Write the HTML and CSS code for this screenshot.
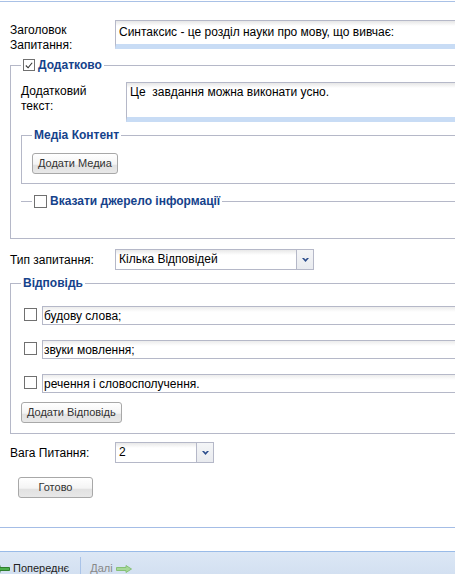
FILE: index.html
```html
<!DOCTYPE html>
<html lang="uk">
<head>
<meta charset="utf-8">
<title>Запитання</title>
<link rel="stylesheet" href="styles.css">
</head>
<body>
<div class="topline"></div>
<div class="form">
  <div class="row row-title">
    <div class="label label-title">Заголовок<br>Запитання:</div>
    <div class="field area area-title">Синтаксис - це розділ науки про мову, що вивчає:</div>
  </div>

  <fieldset class="fs fs-extra">
    <legend><span class="cb cb-legend"><svg width="11" height="11" viewBox="0 0 11 11"><path d="M2 5.5 L4.5 8 L9 2.5" fill="none" stroke="#333" stroke-width="1.2"/></svg></span><span>Додатково</span></legend>
    <div class="row row-extra">
      <div class="label label-extra">Додатковий<br>текст:</div>
      <div class="field area area-extra">Це&nbsp; завдання можна виконати усно.</div>
    </div>
    <fieldset class="fs fs-media">
      <legend>Медіа Контент</legend>
      <button class="btn">Додати Медиа</button>
    </fieldset>
    <fieldset class="fs fs-collapsed">
      <legend><span class="cb cb-src"></span><span>Вказати джерело інформації</span></legend>
    </fieldset>
  </fieldset>

  <div class="row row-select row-type">
    <div class="label">Тип запитання:</div>
    <div class="select select-type">
      <span class="select-text">Кілька Відповідей</span>
      <span class="trigger"><svg width="7" height="4" viewBox="0 0 7 4"><polygon points="0,0 2,0 3.5,1.6 5,0 7,0 3.5,4" fill="#2b4c8b"/></svg></span>
    </div>
  </div>

  <fieldset class="fs fs-answers">
    <legend>Відповідь</legend>
    <div class="ans"><span class="cb cb-ans"></span><div class="field line">будову слова;</div></div>
    <div class="ans"><span class="cb cb-ans"></span><div class="field line">звуки мовлення;</div></div>
    <div class="ans"><span class="cb cb-ans"></span><div class="field line">речення і словосполучення.</div></div>
    <button class="btn btn-add">Додати Відповідь</button>
  </fieldset>

  <div class="row row-select row-weight">
    <div class="label">Вага Питання:</div>
    <div class="select select-weight">
      <span class="select-text">2</span>
      <span class="trigger"><svg width="7" height="4" viewBox="0 0 7 4"><polygon points="0,0 2,0 3.5,1.6 5,0 7,0 3.5,4" fill="#2b4c8b"/></svg></span>
    </div>
  </div>

  <button class="btn btn-done">Готово</button>
</div>

<div class="bottomline"></div>

<div class="footer">
  <svg class="arrow-prev" width="16" height="8" viewBox="0 0 16 8"><polygon points="0.5,4 6,0.5 6,2.5 15.5,2.5 15.5,5.5 6,5.5 6,7.5" fill="#4cae4c" stroke="#2f7f2f" stroke-width="1"/></svg>
  <span class="nav nav-prev">Попереднє</span>
  <span class="sep"></span>
  <span class="nav nav-next">Далі</span>
  <svg class="arrow-next" width="16" height="8" viewBox="0 0 16 8"><polygon points="0.5,2.5 10,2.5 10,0.5 15.5,4 10,7.5 10,5.5 0.5,5.5" fill="#a6d897" stroke="#86c077" stroke-width="1"/></svg>
</div>
</body>
</html>
```

FILE: styles.css
```css
* { box-sizing: border-box; }
html, body { margin: 0; padding: 0; }
body {
  width: 455px;
  height: 574px;
  overflow: hidden;
  background: #fff;
  font-family: "Liberation Sans", Arial, sans-serif;
  font-size: 12px;
  color: #000;
}

.topline { margin-top: 1px; border-top: 1px solid #a9c1e6; }

.form { padding-left: 10px; }

.row { display: flex; align-items: flex-start; }
.row-title { margin-top: 18px; height: 29px; }

.label { line-height: 15px; flex: none; }
.label-title { width: 105px; padding-top: 3px; }
.label-extra { width: 105px; padding-top: 2px; }

.field {
  flex: 1;
  min-width: 0;
  border: 1px solid #b5b8c8;
  border-right: 0;
  background: linear-gradient(#e6e6e6, #fff 5px);
  white-space: nowrap;
  overflow: hidden;
}
.area { border-bottom: 5px solid #c8dcf5; line-height: 14px; padding: 4px 3px 0; }
.area-title { height: 29px; }
.area-extra { height: 40px; padding-top: 2px; }

fieldset {
  margin: 0;
  min-width: 0;
  border: 1px solid #b5b8c8;
  border-right: 0;
}
legend {
  padding: 0 2px;
  height: 14px;
  line-height: 14px;
  font-weight: bold;
  color: #15428b;
  display: flex;
  align-items: center;
  gap: 3px;
}

.cb {
  display: inline-flex;
  align-items: center;
  justify-content: center;
  width: 13px;
  height: 13px;
  border: 1px solid #707070;
  background: #fff;
  flex: none;
}
.cb-legend { width: 12px; height: 12px; }

.fs-extra { margin-top: 9px; padding: 10px 0 30px 10px; }
.fs-media { margin-top: 6px; padding: 11px 0 9px 10px; }
.fs-collapsed { margin-top: 10px; border-width: 1px 0 0 0; padding: 0 0 0 11px; }

.btn {
  display: block;
  height: 21px;
  padding: 0 5px;
  font-family: "Liberation Sans", Arial, sans-serif;
  font-size: 11px;
  line-height: 19px;
  color: #333;
  border: 1px solid #a8a8a8;
  border-radius: 3px;
  background: linear-gradient(#ffffff, #f4f4f4 55%, #e1e1e1 56%, #e8e8e8);
}

.row-select { align-items: center; }
.row-select .label { width: 105px; line-height: 14px; }
.row-type { margin-top: 10px; }
.row-weight { margin-top: 8px; }

.select {
  display: flex;
  height: 21px;
  border: 1px solid #b5b8c8;
  background: linear-gradient(#e8e8e8, #fff 5px);
}
.select-type { width: 199px; }
.select-weight { width: 99px; }
.select-text { flex: 1; padding-left: 3px; line-height: 19px; white-space: nowrap; overflow: hidden; }
.trigger {
  width: 17px;
  flex: none;
  border-left: 1px solid #b5b8c8;
  background: linear-gradient(#f4f5f7, #e9ebef);
  display: flex;
  align-items: center;
  justify-content: center;
  padding-left: 1px;
}

.fs-answers { margin-top: 6px; padding: 16px 0 10px 13px; }
.fs-answers legend { margin-left: -3px; }
.ans { display: flex; align-items: center; gap: 5px; height: 19px; margin-bottom: 15px; }
.ans:nth-of-type(3) { margin-bottom: 9px; }
.cb-ans { margin-top: -2px; }
.line { height: 19px; line-height: 15px; padding: 2px 3px 0 1px; background: linear-gradient(#ececec, #fff 5px); }
.btn-add { margin-left: -3px; }

.btn-done { margin-top: 14px; margin-left: 8px; width: 75px; padding: 0; }

.bottomline { margin-top: 29px; border-top: 1px solid #a4bde6; }

.footer {
  margin-top: 23px;
  height: 30px;
  border-top: 1px solid #99bbe8;
  background: linear-gradient(#dce7f5, #d0def0);
  display: flex;
  align-items: flex-start;
  padding-top: 10px;
  font-size: 11px;
  line-height: 12px;
}
.arrow-prev { margin-left: -6px; margin-top: 3px; flex: none; }
.nav-prev { margin-left: 3px; color: #222; }
.sep { width: 1px; height: 20px; background: #a9c3e8; margin-left: 11px; margin-top: -5px; }
.nav-next { margin-left: 9px; color: #888; }
.arrow-next { margin-left: 3px; margin-top: 3px; flex: none; }
```
